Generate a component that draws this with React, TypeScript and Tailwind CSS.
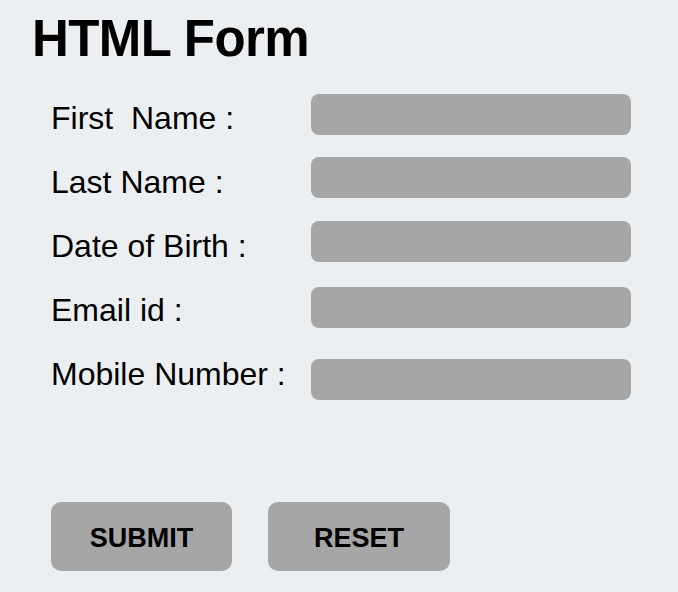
import { FC } from "react";

const fields = [
  { label: "First\u00a0 Name :", gap: "mt-[8px]" },
  { label: "Last Name :", gap: "mt-[22px]" },
  { label: "Date of Birth :", gap: "mt-[23px]" },
  { label: "Email id :", gap: "mt-[25px]" },
  { label: "Mobile Number :", gap: "mt-[31px]" },
];

const App: FC = () => {
  return (
    <div className="min-h-[592px] w-full bg-[#eceff2] pt-[13px] text-black font-['Liberation_Sans',Arial,sans-serif]">
      <h1 className="ml-[32px] text-[51px] leading-[51px] font-bold tracking-[-0.6px]">
        HTML Form
      </h1>

      <form className="mt-[22px] ml-[51px]" onSubmit={(e) => e.preventDefault()}>
        <div className="flex">
          {/* labels */}
          <div className="flex w-[260px] flex-col">
            {fields.map((f) => (
              <label key={f.label} className="h-[64px] text-[32px] leading-[64px] whitespace-nowrap">
                {f.label}
              </label>
            ))}
          </div>
          {/* inputs */}
          <div className="flex w-[320px] flex-col">
            {fields.map((f) => (
              <input
                key={f.label}
                type="text"
                className={`${f.gap} h-[41px] w-full rounded-[8px] bg-[#a6a6a6] outline-none`}
              />
            ))}
          </div>
        </div>

        <div className="mt-[96px] flex gap-[36px]">
          <button
            type="submit"
            className="h-[69px] w-[181px] rounded-[10px] bg-[#a6a6a6] pt-[4px] text-[27px] font-bold"
          >
            SUBMIT
          </button>
          <button
            type="reset"
            className="h-[69px] w-[182px] rounded-[10px] bg-[#a6a6a6] pt-[4px] text-[27px] font-bold"
          >
            RESET
          </button>
        </div>
      </form>
    </div>
  );
};

export default App;
